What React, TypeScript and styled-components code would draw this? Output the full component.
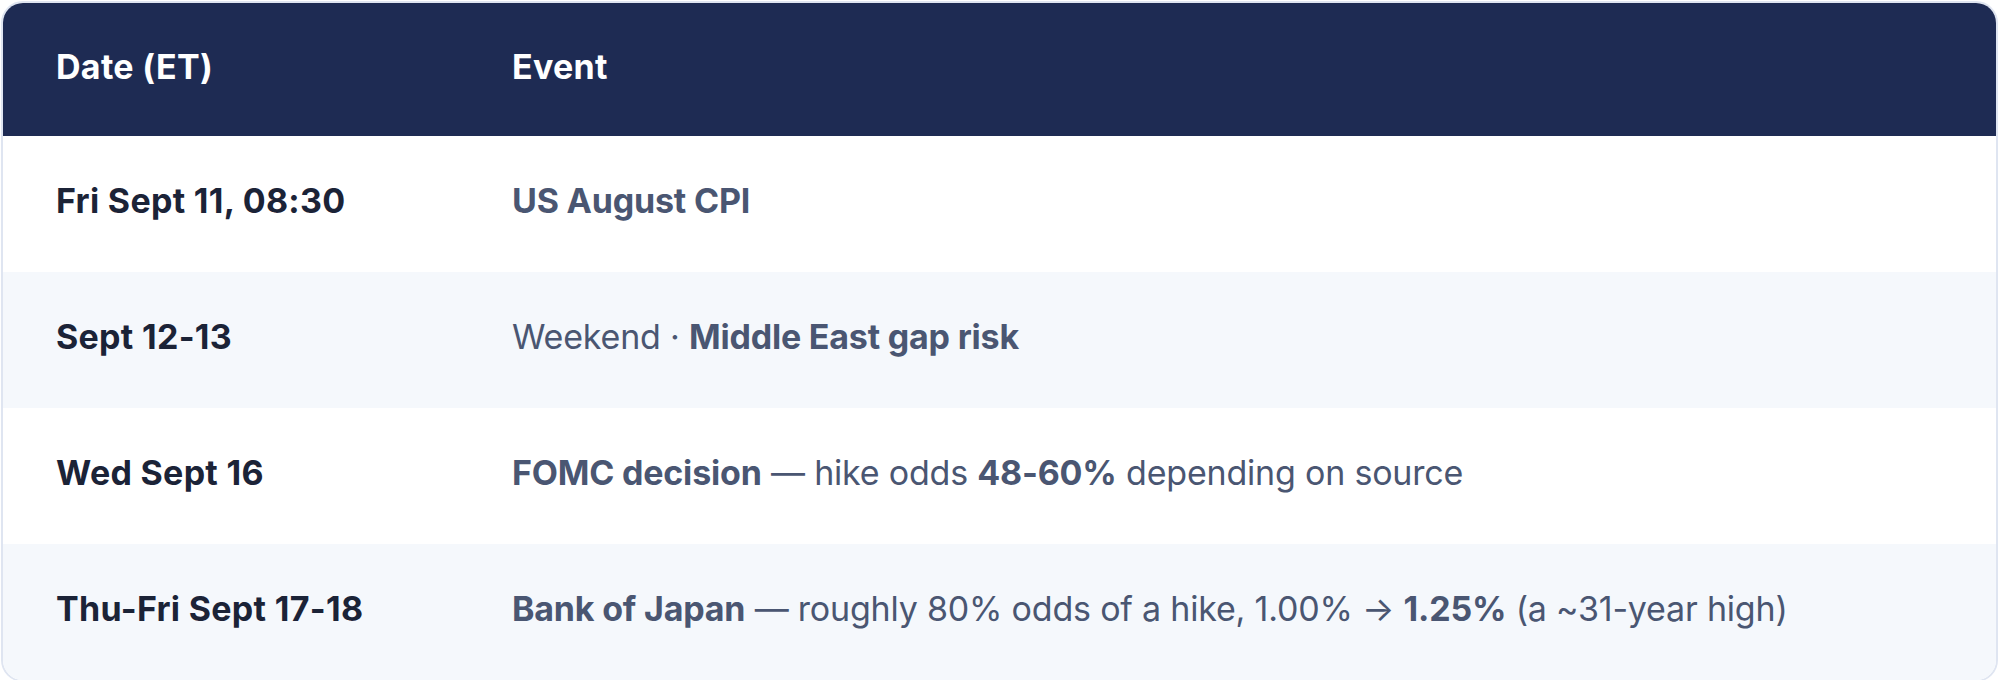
import styled, { createGlobalStyle } from "styled-components";

const GlobalStyle = createGlobalStyle`
  html, body {
    margin: 0;
    padding: 0;
    background: #ffffff;
  }
  body {
    font-family: Inter, "Noto Sans CJK KR", sans-serif;
  }
`

const Page = styled.div`
  padding: 1px 2px 0 1px;
`

const Card = styled.div`
  border: 2px solid #dfe5f1;
  border-radius: 22px;
  overflow: hidden;
  background: #ffffff;
`

const Table = styled.table`
  width: 100%;
  border-collapse: collapse;
  table-layout: fixed;
`

const HeadCell = styled.th`
  background: #1e2b53;
  color: #ffffff;
  text-align: left;
  font-weight: 700;
  font-size: 34px;
  letter-spacing: 0.3px;
  line-height: 44px;
  padding: 42px 0 47px 53px;
`

const Row = styled.tr<{ $alt?: boolean }>`
  background: ${(p) => (p.$alt ? "#f5f8fc" : "#ffffff")};
  & + & td {
    border-top: 2px solid #dfe5f1;
  }
`

const DateCell = styled.td`
  font-size: 34px;
  font-weight: 700;
  letter-spacing: 0.3px;
  color: #1b2337;
  line-height: 44px;
  padding: 43px 0 49px 53px;
  white-space: nowrap;
`

const EventCell = styled.td`
  font-size: 34px;
  font-weight: 400;
  color: #4a5672;
  line-height: 44px;
  letter-spacing: -0.2px;
  padding: 43px 0 49px 53px;
  white-space: nowrap;
`

const Strong = styled.b`
  font-weight: 700;
`

const DateCol = styled.col`
  width: 456px;
`

export default function App() {
  return (
    <Page>
      <GlobalStyle />
      <Card>
        <Table>
          <colgroup>
            <DateCol />
            <col />
          </colgroup>
          <thead>
            <tr>
              <HeadCell>Date (ET)</HeadCell>
              <HeadCell>Event</HeadCell>
            </tr>
          </thead>
          <tbody>
            <Row>
              <DateCell>Fri Sept 11, 08:30</DateCell>
              <EventCell><Strong>US August CPI</Strong></EventCell>
            </Row>
            <Row $alt>
              <DateCell>Sept 12-13</DateCell>
              <EventCell>Weekend · <Strong>Middle East gap risk</Strong></EventCell>
            </Row>
            <Row>
              <DateCell>Wed Sept 16</DateCell>
              <EventCell>
                <Strong>FOMC decision</Strong> — hike odds <Strong>48-60%</Strong> depending on source
              </EventCell>
            </Row>
            <Row $alt>
              <DateCell>Thu-Fri Sept 17-18</DateCell>
              <EventCell>
                <Strong>Bank of Japan</Strong> — roughly 80% odds of a hike, 1.00% → <Strong>1.25%</Strong> (a ~31-year high)
              </EventCell>
            </Row>
          </tbody>
        </Table>
      </Card>
    </Page>
  );
}
